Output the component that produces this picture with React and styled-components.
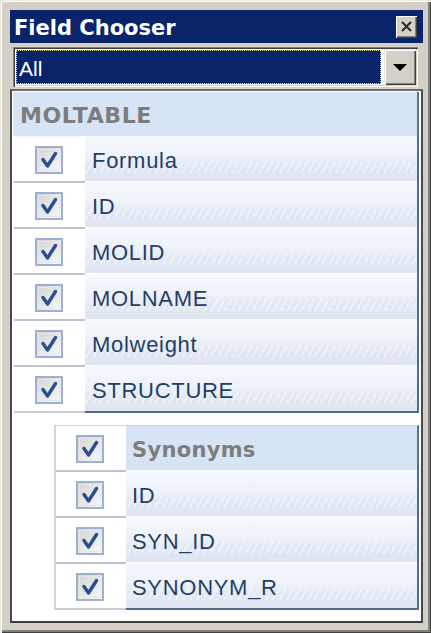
import React from 'react';
import styled, { createGlobalStyle } from 'styled-components';

const GlobalStyle = createGlobalStyle`
  html, body {
    margin: 0;
    padding: 0;
    background: #d4d0c8;
  }
  * { box-sizing: border-box; }
`;

const Window = styled.div`
  width: 431px;
  height: 633px;
  display: flex;
  flex-direction: column;
  padding: 10px 8px 10px 10px;
  background: #d4d0c8;
  box-shadow: inset 1px 1px #e8e6e0, inset 2px 2px #ffffff,
    inset -1px -1px #404040, inset -3px -3px #808080;
  font-family: 'Liberation Sans', Arial, sans-serif;
`;

const TitleBar = styled.div`
  height: 33px;
  display: flex;
  align-items: center;
  justify-content: space-between;
  padding: 0 6px 0 4px;
  background: #0a246a;
`;

const Title = styled.span`
  color: #ffffff;
  font-family: 'DejaVu Sans', Verdana, sans-serif;
  font-weight: bold;
  font-size: 21px;
  line-height: 1;
  margin-top: 3px;
`;

const CloseButton = styled.div`
  width: 21px;
  height: 22px;
  display: flex;
  align-items: center;
  justify-content: center;
  background: #d4d0c8;
  box-shadow: inset 1px 1px #ffffff, inset -1px -1px #404040,
    inset -2px -2px #808080;
`;

const Combo = styled.div`
  margin: 4px 5px 0 3px;
  height: 40px;
  display: flex;
  gap: 3px;
  padding: 2px;
  background: #ffffff;
  box-shadow: inset 1px 1px #808080, inset 2px 2px #404040,
    inset -1px -1px #ffffff, inset -2px -2px #d4d0c8;
`;

const ComboField = styled.div`
  flex: 1;
  display: flex;
  align-items: center;
  margin: 1px 0 1px 1px;
  padding: 3px 0 0 2px;
  background: #0a246a;
  border: 1px dotted #e6d894;
`;

const ComboText = styled.span`
  color: #ffffff;
  font-size: 21px;
  line-height: 1;
`;

const ComboButton = styled.div`
  width: 32px;
  display: flex;
  align-items: center;
  justify-content: center;
  background: #d4d0c8;
  box-shadow: inset 1px 1px #e8e6e0, inset 2px 2px #ffffff,
    inset -1px -1px #404040, inset -2px -2px #808080;
`;

const Panel = styled.div`
  flex: 1;
  margin-top: 2px;
  padding: 1px;
  background: #ffffff;
  border-style: solid;
  border-width: 2px;
  border-color: #6a6a6a #4a4a4a #3c3c3c #4a4a4a;
`;

const Table = styled.div`
  display: flex;
  flex-direction: column;
  margin: ${(p) => (p.$child ? '12px 1px 0 41px' : '0 1px 0 0')};
  border-right: 2px solid #52708f;
  border-left: ${(p) => (p.$child ? '2px solid #d0d4da' : 'none')};
  border-top: ${(p) => (p.$child ? '1px solid #d0d4da' : 'none')};
`;

const GroupHeader = styled.div`
  height: 45px;
  display: flex;
  align-items: center;
  padding: 3px 0 0 7px;
  background: #d6e4f5;
  border-bottom: 1px solid #f4f7fc;
  color: #7d7d7d;
  font-family: 'DejaVu Sans', Verdana, sans-serif;
  font-weight: bold;
  font-size: 22px;
  letter-spacing: 0.6px;
`;

const Row = styled.div`
  height: 46px;
  display: grid;
  grid-template-columns: ${(p) => (p.$child ? '70px' : '72px')} 1fr;
`;

const CheckCell = styled.div`
  display: flex;
  align-items: center;
  justify-content: center;
  padding: 1px 2px 0 0;
  margin-left: ${(p) => (p.$child ? '0' : '1px')};
  background: #ffffff;
  border-bottom: 2px solid ${(p) => (p.$last ? '#c9ced6' : '#bcc3ce')};
`;

const NameCell = styled.div`
  display: flex;
  align-items: center;
  padding: 4px 0 0 ${(p) => (p.$child ? '6px' : '7px')};
  border-bottom: 2px solid ${(p) => (p.$last ? '#4e6b8c' : '#fafcff')};
  color: ${(p) => (p.$header ? '#7d7d7d' : '#263d66')};
  font-family: ${(p) =>
    p.$header ? "'DejaVu Sans', Verdana, sans-serif" : "'Liberation Sans', Arial, sans-serif"};
  font-weight: ${(p) => (p.$header ? 'bold' : 'normal')};
  font-size: ${(p) => (p.$header ? '21px' : '22px')};
  letter-spacing: ${(p) => (p.$header ? '0.3px' : '0.7px')};
  background: ${(p) =>
    p.$header
      ? '#d6e4f5'
      : `repeating-linear-gradient(120deg, rgba(255,255,255,0.4) 0 2px, rgba(255,255,255,0) 2px 6px) 0 24px / 100% 12px no-repeat,
         linear-gradient(to bottom, #f5f8fc 0%, #eef2f9 45%, #e4eaf4 60%, #dee5f1 100%)`};
`;

const CheckBox = () => (
  <svg width="28" height="28" viewBox="0 0 28 28">
    <defs>
      <linearGradient id="cbfill" x1="0" y1="0" x2="1" y2="1">
        <stop offset="0" stopColor="#d2d2d2" />
        <stop offset="1" stopColor="#fbfbfb" />
      </linearGradient>
    </defs>
    <rect x="1" y="1" width="26" height="26" fill="url(#cbfill)" stroke="#9db0d0" strokeWidth="2" />
    <rect x="3.5" y="3.5" width="21" height="21" fill="none" stroke="#e2e8f2" strokeWidth="1" />
    <path d="M8 13.5 L12.5 20 L20.5 7.5" fill="none" stroke="#2c4e8f" strokeWidth="3.4" strokeLinecap="round" strokeLinejoin="round" />
  </svg>
);

const moltableFields = ['Formula', 'ID', 'MOLID', 'MOLNAME', 'Molweight', 'STRUCTURE'];
const synonymFields = ['ID', 'SYN_ID', 'SYNONYM_R'];

const App = () => {
  return (
    <>
      <GlobalStyle />
      <Window>
        <TitleBar>
          <Title>Field Chooser</Title>
          <CloseButton>
            <svg width="13" height="13" viewBox="0 0 13 13">
              <path d="M2 2 L11 11 M11 2 L2 11" stroke="#2a2a2a" strokeWidth="2" />
            </svg>
          </CloseButton>
        </TitleBar>
        <Combo>
          <ComboField>
            <ComboText>All</ComboText>
          </ComboField>
          <ComboButton>
            <svg width="16" height="9" viewBox="0 0 16 9">
              <path d="M1 1 L15 1 L8 8 Z" fill="#000000" />
            </svg>
          </ComboButton>
        </Combo>
        <Panel>
          <Table>
            <GroupHeader>MOLTABLE</GroupHeader>
            {moltableFields.map((f, i) => {
              const last = i === moltableFields.length - 1;
              return (
                <Row key={f}>
                  <CheckCell $last={last}>
                    <CheckBox />
                  </CheckCell>
                  <NameCell $last={last}>{f}</NameCell>
                </Row>
              );
            })}
          </Table>
          <Table $child>
            <Row $child>
              <CheckCell $child>
                <CheckBox />
              </CheckCell>
              <NameCell $child $header>Synonyms</NameCell>
            </Row>
            {synonymFields.map((f, i) => {
              const last = i === synonymFields.length - 1;
              return (
                <Row $child key={f}>
                  <CheckCell $child $last={last}>
                    <CheckBox />
                  </CheckCell>
                  <NameCell $child $last={last}>{f}</NameCell>
                </Row>
              );
            })}
          </Table>
        </Panel>
      </Window>
    </>
  );
};

export default App;
